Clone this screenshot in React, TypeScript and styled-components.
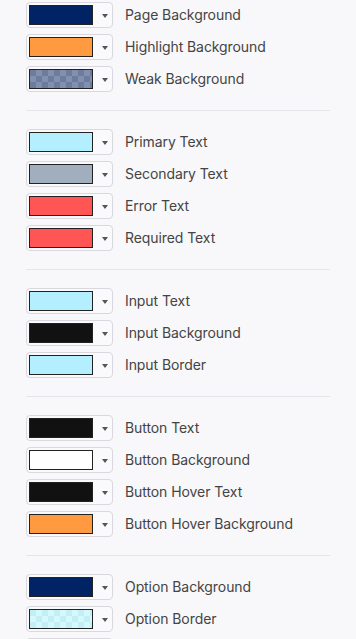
import React from "react";
import styled, { createGlobalStyle, css } from "styled-components";

const GlobalStyle = createGlobalStyle`
    html, body {
        margin: 0;
        padding: 0;
        background: #f8f8fa;
    }
    body {
        font-family: Inter, "Noto Sans", "Liberation Sans", sans-serif;
    }
`;

const Page = styled.div`
    width: 304px;
    margin-left: 26px;
`;

const Section = styled.section`
    display: flex;
    flex-direction: column;
    gap: 6px;
    padding: 18px 0;
    border-bottom: 1px solid #e6e6ea;

    &:first-child {
        padding-top: 2px;
    }
`;

const Row = styled.div`
    display: flex;
    align-items: center;
    height: 26px;
`;

const Picker = styled.div`
    box-sizing: border-box;
    display: flex;
    align-items: center;
    width: 87px;
    height: 26px;
    padding: 2px;
    border: 1px solid #d8d8de;
    border-radius: 4px;
    background: #fafafc;
`;

const Swatch = styled.div<{ $color: string; $checker?: string }>`
    box-sizing: border-box;
    width: 64px;
    height: 20px;
    border: 1px solid #222;
    background-color: ${(p) => p.$color};
    ${(p) =>
        p.$checker &&
        css`
            background-image: linear-gradient(45deg, ${p.$checker} 25%, transparent 25%, transparent 75%, ${p.$checker} 75%),
                linear-gradient(45deg, ${p.$checker} 25%, transparent 25%, transparent 75%, ${p.$checker} 75%);
            background-size: 12px 12px;
            background-position: 0 0, 6px 6px;
        `}
`;

const Arrow = styled.span`
    width: 0;
    height: 0;
    margin-left: 9px;
    margin-top: 1px;
    border-left: 3px solid transparent;
    border-right: 3px solid transparent;
    border-top: 4px solid #555;
`;

const Label = styled.span`
    margin-left: 12px;
    padding-bottom: 2px;
    font-size: 14px;
    line-height: 17px;
    letter-spacing: -0.08px;
    color: #444;
    white-space: nowrap;
`;

type Item = { label: string; color: string; checker?: string };

const groups: Item[][] = [
    [
        { label: "Page Background", color: "#002366" },
        { label: "Highlight Background", color: "#ff9a40" },
        { label: "Weak Background", color: "#6d7c9d", checker: "#8290b0" },
    ],
    [
        { label: "Primary Text", color: "#b3efff" },
        { label: "Secondary Text", color: "#a0aebe" },
        { label: "Error Text", color: "#ff5555" },
        { label: "Required Text", color: "#ff5555" },
    ],
    [
        { label: "Input Text", color: "#b3efff" },
        { label: "Input Background", color: "#111111" },
        { label: "Input Border", color: "#b3efff" },
    ],
    [
        { label: "Button Text", color: "#111111" },
        { label: "Button Background", color: "#ffffff" },
        { label: "Button Hover Text", color: "#111111" },
        { label: "Button Hover Background", color: "#ff9a40" },
    ],
    [
        { label: "Option Background", color: "#002366" },
        { label: "Option Border", color: "#c2eef6", checker: "#d5f8fd" },
        { label: "Option Hover Text", color: "#111111" },
    ],
];

const App: React.FC = () => {
    return (
        <>
            <GlobalStyle />
            <Page>
                {groups.map((group, i) => (
                    <Section key={i}>
                        {group.map((item) => (
                            <Row key={item.label}>
                                <Picker>
                                    <Swatch $color={item.color} $checker={item.checker} />
                                    <Arrow />
                                </Picker>
                                <Label>{item.label}</Label>
                            </Row>
                        ))}
                    </Section>
                ))}
            </Page>
        </>
    );
};

export default App;
